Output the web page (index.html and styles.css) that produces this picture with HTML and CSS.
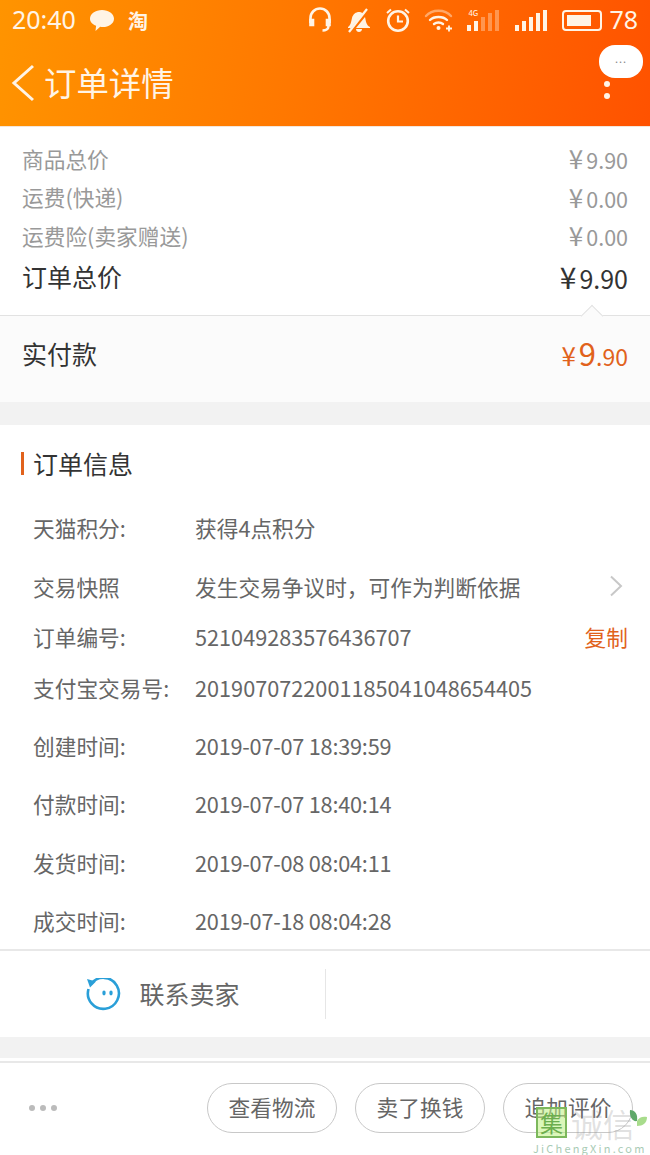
FILE: index.html
```html
<!DOCTYPE html>
<html lang="zh-CN">
  <head>
    <meta charset="UTF-8">
    <meta name="viewport" content="width=device-width, initial-scale=1.0">
    <title>订单详情</title>
    <link rel="stylesheet" href="styles.css">
  </head>
  <body>
  <header class="top">
    <div class="status">
      <span class="time">20:40</span>
      <svg class="ic-chat" width="26" height="24" viewBox="0 0 26 24"><path d="M13 2c6.500 0 12 3.700 12 8.700 0 5-5.500 8.300-11 8.300-1 0-2 0-2.800-.2L6.500 23l.6-5.200C3.500 16.300 1 13.800 1 10.700 1 5.700 6.500 2 13 2z" fill="#fff4e6"/></svg>
      <span class="tao">淘</span>
      <span class="status-right">
        <svg width="26" height="28" viewBox="0 0 26 28" fill="none" stroke="#fff4e6" stroke-width="2.600"><path d="M3.500 17V12a9.500 9.500 0 0 1 19 0v5"/><path d="M3.500 14v5h2.500v-5zM22.500 14v5H20v-5z" fill="#fff4e6"/><path d="M21.500 20c0 3-3 4.500-6 4.500"/></svg>
        <svg width="26" height="26" viewBox="0 0 26 26" fill="none"><path d="M2 20c3-2 3-5 4-9 1-4 4-6 7-6 1.500 0 3 .5 4 1.500L5 21H2zM19 10c1 4 1 8 5 10v1H10zM10 22h6c0 2-1.500 3-3 3s-3-1-3-3z" fill="#fff4e6"/><path d="M3 25L21 2" stroke="#fff4e6" stroke-width="2.200"/></svg>
        <svg width="26" height="26" viewBox="0 0 26 26" fill="none" stroke="#fff4e6"><circle cx="13" cy="14" r="9.800" stroke-width="2.600"/><path d="M13 8.500V14.500h5" stroke-width="2.200"/><path d="M2 6l4-3.500M24 6l-4-3.500" stroke-width="2"/></svg>
        <svg width="30" height="24" viewBox="0 0 30 24" fill="none" stroke="#fff4e6" stroke-linecap="round"><path d="M2 8c6-7 19-7 25 0" stroke-width="2.400" opacity=".45"/><path d="M6 12c4-4 13-4 17 0M10 16c2.500-2 6.500-2 9 0" stroke-width="2.400"/><circle cx="14.500" cy="20" r="2" fill="#fff4e6" stroke="none"/><path d="M22 20.500h6M25 17.500v6" stroke-width="1.800" stroke-linecap="butt"/></svg>
        <span class="signal sim1"><small>4G</small><i class="s1"></i><i class="s2"></i><i class="s3 dim"></i><i class="s4 dim"></i><i class="s5 dim"></i></span>
        <span class="signal sim2"><i class="s1"></i><i class="s2"></i><i class="s3"></i><i class="s4"></i><i class="s5"></i></span>
        <span class="battery"><span class="battery-fill"></span></span>
        <span class="level">78</span>
      </span>
    </div>
    <div class="nav">
      <svg class="back" width="24" height="38" viewBox="0 0 24 38" fill="none"><path d="M22 2L3 19l19 17" stroke="#fff4e6" stroke-width="3"/></svg>
      <span class="nav-title">订单详情</span>
      <span class="nav-more"><span class="bubble">...</span><i></i><i></i></span>
    </div>
  </header>

  <section class="summary">
    <div class="sum-row"><span>商品总价</span><span class="money"><em>¥</em>9.90</span></div>
    <div class="sum-row"><span>运费(快递)</span><span class="money"><em>¥</em>0.00</span></div>
    <div class="sum-row"><span>运费险(卖家赠送)</span><span class="money"><em>¥</em>0.00</span></div>
    <div class="sum-row total"><span>订单总价</span><span class="money"><em>¥</em>9.90</span></div>
  </section>
  <section class="paid">
    <span class="notch"></span>
    <span>实付款</span>
    <span class="paid-money"><em>¥</em><b>9</b><small>.90</small></span>
  </section>

  <div class="gap"></div>

  <section class="info">
    <h2 class="info-title">订单信息</h2>
    <div class="info-row r1"><span class="k">天猫积分:</span><span class="v">获得4点积分</span></div>
    <div class="info-row r2"><span class="k">交易快照</span><span class="v">发生交易争议时，可作为判断依据</span>
      <svg class="chev" width="14" height="22" viewBox="0 0 14 22" fill="none"><path d="M2 1.500L12 11 2 20.500" stroke="#c8c8c8" stroke-width="2"/></svg>
    </div>
    <div class="info-row r3"><span class="k">订单编号:</span><span class="v">521049283576436707</span><span class="copy">复制</span></div>
    <div class="info-row r4"><span class="k">支付宝交易号:</span><span class="v">2019070722001185041048654405</span></div>
    <div class="info-row r4"><span class="k">创建时间:</span><span class="v ts">2019-07-07 18:39:59</span></div>
    <div class="info-row r4"><span class="k">付款时间:</span><span class="v ts">2019-07-07 18:40:14</span></div>
    <div class="info-row r7"><span class="k">发货时间:</span><span class="v ts">2019-07-08 08:04:11</span></div>
    <div class="info-row r8"><span class="k">成交时间:</span><span class="v ts">2019-07-18 08:04:28</span></div>
  </section>

  <section class="contact">
    <div class="contact-left">
      <svg class="ww" width="36" height="36" viewBox="0 0 36 36" fill="none"><path d="M6 6a15.500 15.500 0 1 1-2.500 5" stroke="#2a9fd8" stroke-width="2.600"/><path d="M2 1l9 2.500-6 6z" fill="#2a9fd8"/><ellipse cx="19" cy="15" rx="1.700" ry="2.400" fill="#2a9fd8"/><ellipse cx="26" cy="15" rx="1.700" ry="2.400" fill="#2a9fd8"/></svg>
      <span class="contact-text">联系卖家</span>
    </div>
  </section>

  <div class="gap gap-last"></div>

  <footer class="actions">
    <span class="dots"><i></i><i></i><i></i></span>
    <span class="btn">查看物流</span>
    <span class="btn">卖了换钱</span>
    <span class="btn">追加评价</span>
  </footer>

  <div class="watermark">
    <span class="wm-logo">集</span><span class="wm-name">诚信</span>
    <svg class="wm-leaf" width="20" height="24" viewBox="0 0 20 24"><path d="M2 2c5 0 8 4 7 11-4 1-8-4-7-11z" fill="#5fa86a"/><path d="M9 13c2-4 6-5 10-4 0 6-4 9-10 9z" fill="#a8dc8c"/></svg>
    <span class="wm-url">JiChengXin.com</span>
  </div>
  </body>
</html>
```

FILE: styles.css
```css
html, body {
  margin: 0;
  height: 100%;
}
body {
  position: relative;
  width: 650px;
  height: 1155px;
  overflow: hidden;
  background: #fff;
  font-family: "Noto Sans CJK SC", "Noto Sans", sans-serif;
  font-size: 21.700px;
  color: #666;
}
em {
  font-style: normal;
}

/* header */
.top {
  height: 126px;
  background: linear-gradient(100deg, #ff9400 0%, #ff7800 45%, #ff5200 100%);
  color: #fff4e6;
}
.status {
  display: flex;
  align-items: center;
  height: 40px;
  padding: 0 12px;
}
.time {
  font-size: 25px;
  font-family: "Noto Sans", sans-serif;
  width: 64px;
  margin-top: -2px;
}
.ic-chat {
  margin-left: 13px;
}
.tao {
  margin-left: 13px;
  font-size: 20px;
  font-weight: 700;
}
.status-right {
  display: flex;
  align-items: center;
  gap: 13px;
  margin-left: auto;
}
.signal {
  position: relative;
  display: flex;
  align-items: flex-end;
  gap: 3px;
  height: 22px;
}
.signal i {
  display: block;
  width: 4px;
  background: #fff4e6;
}
.signal .dim {
  opacity: .35;
}
.signal small {
  position: absolute;
  left: 1px;
  top: -1px;
  font-size: 8px;
  line-height: 9px;
}
.sim2 {
  margin-left: 3px;
}
.s1 { height: 6px; }
.s2 { height: 10px; }
.s3 { height: 14px; }
.s4 { height: 18px; }
.s5 { height: 21px; }
.battery {
  display: block;
  width: 30px;
  height: 11px;
  margin-left: 2px;
  padding: 3px;
  border: 2px solid #fff4e6;
  border-radius: 4px;
}
.battery-fill {
  display: block;
  width: 24px;
  height: 11px;
  background: #fff4e6;
}
.level {
  font-size: 25px;
  font-family: "Noto Sans", sans-serif;
  margin-left: -6px;
  margin-top: -2px;
}
.nav {
  position: relative;
  display: flex;
  align-items: center;
  height: 86px;
  padding-left: 11px;
}
.back {
  margin-right: 9px;
}
.nav-title {
  font-size: 32.400px;
  padding-bottom: 4px;
}
.nav-more {
  position: absolute;
  right: 7px;
  top: 5px;
  width: 44px;
  display: flex;
  flex-direction: column;
  align-items: center;
}
.nav-more i {
  display: block;
  width: 6px;
  height: 6px;
  margin-top: 6px;
  border-radius: 50%;
  background: #fff4e6;
  position: relative;
  left: -14px;
}
.bubble {
  width: 44px;
  height: 33px;
  margin-bottom: -3px;
  border-radius: 16px;
  background: #fff;
  color: #888;
  font-size: 11px;
  letter-spacing: 1px;
  line-height: 26px;
  text-align: center;
}

/* totals */
.summary {
  padding: 12px 22px 0;
  box-sizing: border-box;
  height: 190px;
  border-top: 1px solid #f3e6da;
  border-bottom: 1px solid #e2e2e2;
}
.sum-row {
  display: flex;
  justify-content: space-between;
  align-items: center;
  height: 38.500px;
  color: #999;
}
.money {
  font-size: 21.500px;
  line-height: 1;
}
.money em {
  font-size: 26px;
  line-height: 1;
  margin-right: 3px;
}
.total {
  height: 42px;
  font-size: 25px;
  color: #333;
}
.total .money {
  font-size: 25px;
}
.total .money em {
  font-size: 30px;
  margin-right: 3px;
}
.paid {
  position: relative;
  display: flex;
  justify-content: space-between;
  align-items: center;
  box-sizing: border-box;
  height: 86px;
  padding: 0 22px 12px;
  background: #fbfbfb;
  font-size: 25px;
  color: #333;
}
.notch {
  position: absolute;
  right: 50px;
  top: -8px;
  width: 15px;
  height: 15px;
  background: #fbfbfb;
  border-top: 1px solid #e2e2e2;
  border-left: 1px solid #e2e2e2;
  transform: rotate(45deg);
}
.paid-money {
  color: #e1621c;
  display: flex;
  align-items: baseline;
  margin-top: -2px;
}
.paid-money em {
  font-size: 26px;
  margin-right: 3px;
}
.paid-money b {
  font-weight: 400;
  font-size: 31px;
}
.paid-money small {
  font-size: 23px;
}
.gap {
  height: 23px;
  background: #f2f2f2;
}

/* order info */
.info {
  height: 526px;
  box-sizing: border-box;
  border-bottom: 2px solid #e8e8e8;
}
.info-title {
  display: flex;
  align-items: center;
  box-sizing: border-box;
  margin: 0;
  height: 71px;
  padding: 6px 0 0 21px;
  font-size: 25px;
  font-weight: 400;
  color: #333;
  line-height: 1;
}
.info-title::before {
  content: "";
  width: 3px;
  height: 23px;
  margin-right: 9px;
  background: #e1621c;
}
.info-row {
  display: flex;
  align-items: center;
  padding: 0 22px 0 33px;
}
/* row pitch in the reference is uneven */
.r1 { height: 62px; }
.r2 { height: 56px; }
.r3 { height: 44px; }
.r4 { height: 58px; }
.r7 { height: 60px; }
.r8 { height: 56px; }
.k {
  width: 162px;
  white-space: nowrap;
}
.v {
  flex: 1;
  white-space: nowrap;
}
.ts {
  letter-spacing: -.22px;
}
.chev {
  margin-right: 5px;
}
.copy {
  color: #e1621c;
}

/* contact */
.contact {
  height: 86px;
  display: flex;
  align-items: center;
}
.contact-left {
  display: flex;
  align-items: center;
  justify-content: center;
  gap: 18px;
  box-sizing: border-box;
  width: 326px;
  height: 50px;
  border-right: 1px solid #e6e6e6;
  font-size: 25px;
}
.contact-text {
  padding-bottom: 2px;
}
.ww {
  margin-top: 4px;
}
.gap-last {
  height: 26px;
  box-sizing: border-box;
  background: linear-gradient(#f2f2f2 21px, #fff 21px);
  border-bottom: 2px solid #e8e8e8;
}

/* bottom bar */
.actions {
  display: flex;
  align-items: center;
  gap: 18px;
  height: 89px;
  padding: 0 17px 0 29px;
}
.dots {
  display: flex;
  gap: 5px;
  margin-right: auto;
}
.dots i {
  display: block;
  width: 6px;
  height: 6px;
  border-radius: 50%;
  background: #bbb;
}
.btn {
  display: flex;
  align-items: center;
  justify-content: center;
  width: 130px;
  height: 50px;
  padding-bottom: 3px;
  box-sizing: border-box;
  border: 1px solid #c8c8c8;
  border-radius: 25px;
}

/* watermark */
.watermark {
  position: absolute;
  left: 533px;
  top: 1104px;
  width: 117px;
  height: 51px;
  color: #6cae4e;
}
.wm-logo {
  position: absolute;
  left: 3px;
  top: 3px;
  width: 27px;
  height: 27px;
  border: 2px solid #7cb85c;
  background: rgba(190, 240, 130, .55);
  font-size: 23px;
  line-height: 26px;
  text-align: center;
}
.wm-name {
  position: absolute;
  left: 38px;
  top: 2px;
  font-size: 32px;
  line-height: 34px;
  color: rgba(150, 150, 150, .28);
}
.wm-leaf {
  position: absolute;
  left: 95px;
  top: 4px;
}
.wm-url {
  position: absolute;
  left: 0;
  top: 37px;
  font-size: 11px;
  line-height: 14px;
  letter-spacing: 2.200px;
  color: #a9cbb5;
  white-space: nowrap;
}
```
